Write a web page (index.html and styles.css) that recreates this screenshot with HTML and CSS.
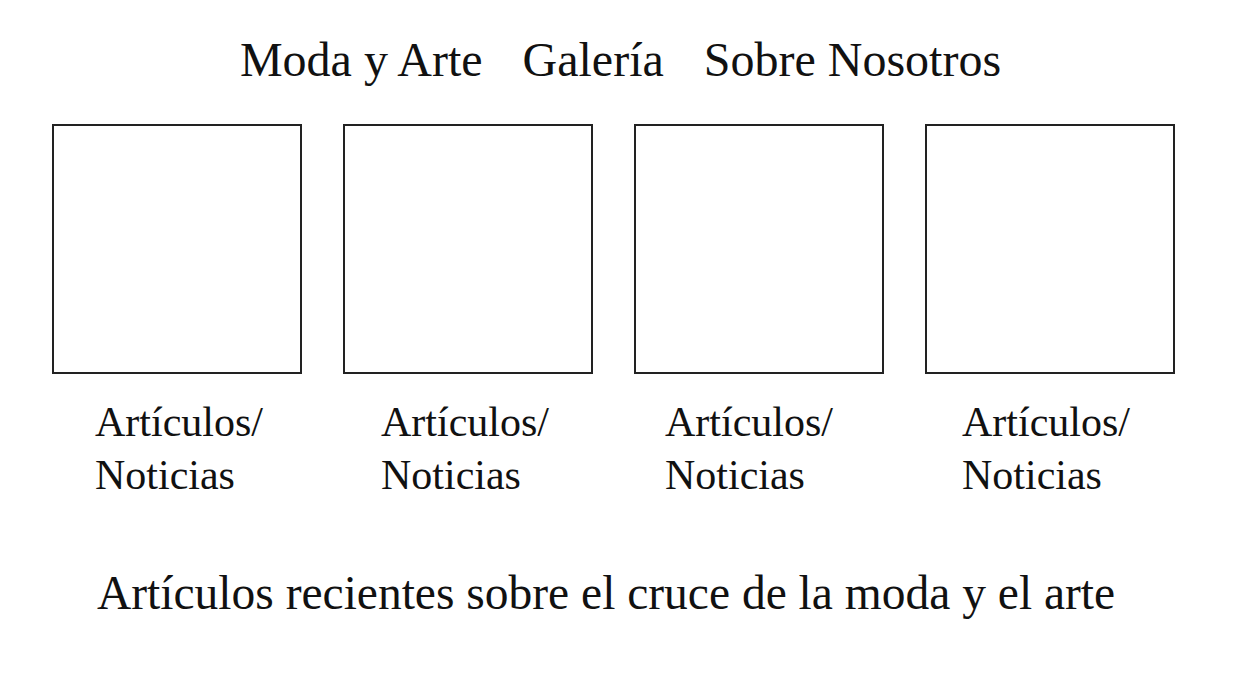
FILE: index.html
```html
<!DOCTYPE html>
<html lang="es">
<head>
  <meta charset="UTF-8">
  <meta name="viewport" content="width=device-width, initial-scale=1.0">
  <title>Moda y Arte</title>
  <link rel="stylesheet" href="styles.css">
</head>
<body>
  <nav class="nav">
    <a href="#">Moda y Arte</a>
    <a href="#">Galería</a>
    <a href="#">Sobre Nosotros</a>
  </nav>

  <div class="cards">
    <div class="card">
      <div class="card-box"></div>
      <div class="card-label">Artículos/<br>Noticias</div>
    </div>
    <div class="card">
      <div class="card-box"></div>
      <div class="card-label">Artículos/<br>Noticias</div>
    </div>
    <div class="card">
      <div class="card-box"></div>
      <div class="card-label">Artículos/<br>Noticias</div>
    </div>
    <div class="card">
      <div class="card-box"></div>
      <div class="card-label">Artículos/<br>Noticias</div>
    </div>
  </div>

  <p class="recent">Artículos recientes sobre el cruce de la moda y el arte</p>
</body>
</html>
```

FILE: styles.css
```css
body {
  font-family: "Liberation Serif", "Times New Roman", serif;
  color: #111;
  background: #fff;
  margin: 0;
  padding: 0;
}
.nav {
  display: flex;
  justify-content: center;
  gap: 40px;
  padding-top: 32px;
  font-size: 48px;
  line-height: 56px;
}
.nav a {
  color: #111;
  text-decoration: none;
}
.cards {
  display: flex;
  justify-content: space-between;
  padding: 0 66px 0 52px;
  margin-top: 36px;
}
.card {
  width: 250px;
}
.card-box {
  width: 250px;
  height: 250px;
  box-sizing: border-box;
  border: 2px solid #222;
}
.card-label {
  margin-top: 22px;
  font-size: 42px;
  line-height: 53px;
  padding-left: 43px;
}
.card:nth-child(2) .card-label {
  padding-left: 38px;
}
.card:nth-child(3) .card-label {
  padding-left: 31px;
}
.card:nth-child(4) .card-label {
  padding-left: 37px;
}
.recent {
  margin: 63px 0 0;
  padding-left: 97px;
  font-size: 47.5px;
  line-height: 56px;
}
```
